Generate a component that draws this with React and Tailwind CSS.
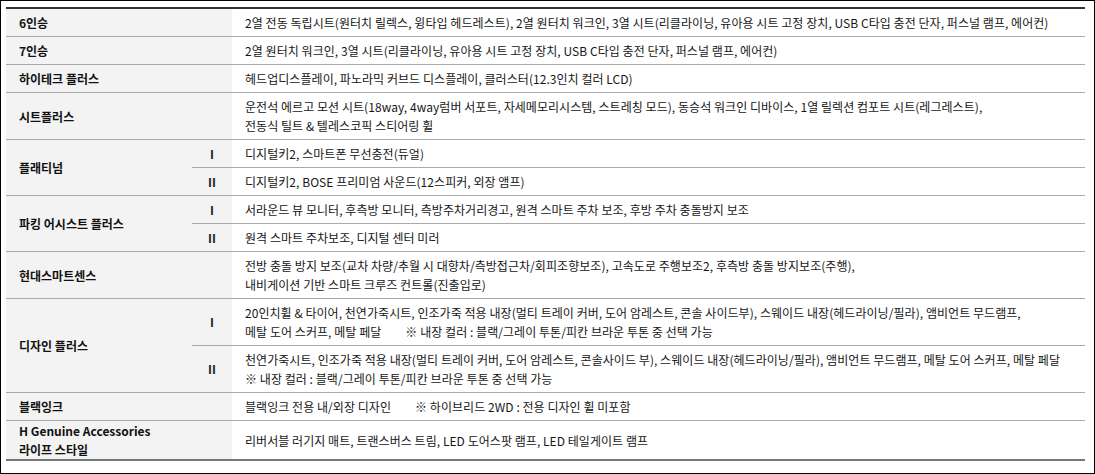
import React from "react";

const rows = [
  { label: "6인승", content: ["2열 전동 독립시트(원터치 릴렉스, 윙타입 헤드레스트), 2열 원터치 워크인, 3열 시트(리클라이닝, 유아용 시트 고정 장치, USB C타입 충전 단자, 퍼스널 램프, 에어컨)"] },
  { label: "7인승", content: ["2열 원터치 워크인, 3열 시트(리클라이닝, 유아용 시트 고정 장치, USB C타입 충전 단자, 퍼스널 램프, 에어컨)"] },
  { label: "하이테크 플러스", content: ["헤드업디스플레이, 파노라믹 커브드 디스플레이, 클러스터(12.3인치 컬러 LCD)"] },
  { label: "시트플러스", content: ["운전석 에르고 모션 시트(18way, 4way럼버 서포트, 자세메모리시스템, 스트레칭 모드), 동승석 워크인 디바이스, 1열 릴렉션 컴포트 시트(레그레스트),", "전동식 틸트 & 텔레스코픽 스티어링 휠"] },
  { label: "플래티넘", subs: [
    { n: "I", content: ["디지털키2, 스마트폰 무선충전(듀얼)"] },
    { n: "II", content: ["디지털키2, BOSE 프리미엄 사운드(12스피커, 외장 앰프)"] },
  ] },
  { label: "파킹 어시스트 플러스", subs: [
    { n: "I", content: ["서라운드 뷰 모니터, 후측방 모니터, 측방주차거리경고, 원격 스마트 주차 보조, 후방 주차 충돌방지 보조"] },
    { n: "II", content: ["원격 스마트 주차보조, 디지털 센터 미러"] },
  ] },
  { label: "현대스마트센스", content: ["전방 충돌 방지 보조(교차 차량/추월 시 대향차/측방접근차/회피조향보조), 고속도로 주행보조2, 후측방 충돌 방지보조(주행),", "내비게이션 기반 스마트 크루즈 컨트롤(진출입로)"] },
  { label: "디자인 플러스", subs: [
    { n: "I", content: ["20인치휠 & 타이어, 천연가죽시트, 인조가죽 적용 내장(멀티 트레이 커버, 도어 암레스트, 콘솔 사이드부), 스웨이드 내장(헤드라이닝/필라), 앰비언트 무드램프,", ["메탈 도어 스커프, 메탈 페달", "※ 내장 컬러 : 블랙/그레이 투톤/피칸 브라운 투톤 중 선택 가능"]] },
    { n: "II", content: ["천연가죽시트, 인조가죽 적용 내장(멀티 트레이 커버, 도어 암레스트, 콘솔사이드 부), 스웨이드 내장(헤드라이닝/필라), 앰비언트 무드램프, 메탈 도어 스커프, 메탈 페달", "※ 내장 컬러 : 블랙/그레이 투톤/피칸 브라운 투톤 중 선택 가능"] },
  ] },
  { label: "블랙잉크", content: [["블랙잉크 전용 내/외장 디자인", "※ 하이브리드 2WD : 전용 디자인 휠 미포함"]] },
  { label: ["H Genuine Accessories", "라이프 스타일"], content: ["리버서블 러기지 매트, 트랜스버스 트림, LED 도어스팟 램프, LED 테일게이트 램프"] },
];

function Content({ lines }) {
  return (
    <div className="flex-1 pl-[13px] py-[4px] flex flex-col justify-center text-[12px] leading-[19px] tracking-[0.05px] text-[#161616] whitespace-nowrap">
      {lines.map((l, i) =>
        Array.isArray(l) ? (
          <div key={i} className="flex gap-[24px]">
            <span>{l[0]}</span>
            <span>{l[1]}</span>
          </div>
        ) : (
          <div key={i}>{l}</div>
        )
      )}
    </div>
  );
}

export default function App() {
  return (
    <div
      className="w-[1095px] h-[474px] border border-black bg-white"
      style={{ fontFamily: '"Noto Sans CJK KR", "Noto Sans", sans-serif' }}
    >
      <div className="ml-[5px] mt-[6px] w-[1079px] border-t-2 border-[#333] border-b-2 border-b-[#777]">
        {rows.map((r, i) => (
          <div
            key={i}
            className={`flex ${i < rows.length - 1 ? "border-b border-[#aaaaaa]" : ""}`}
          >
            <div
              className={`${r.subs ? "w-[186px]" : "w-[226px]"} shrink-0 bg-[#f3f3f3] pl-[13px] flex flex-col justify-center text-[12px] leading-[19px] font-bold text-[#111]`}
            >
              {Array.isArray(r.label) ? r.label.map((t, k) => <div key={k}>{t}</div>) : r.label}
            </div>
            {r.subs ? (
              <div className="flex-1 flex flex-col">
                {r.subs.map((s, k) => (
                  <div
                    key={k}
                    className={`flex ${k < r.subs.length - 1 ? "border-b border-[#aaaaaa]" : ""}`}
                  >
                    <div className="w-[40px] shrink-0 bg-[#f3f3f3] flex items-center justify-center text-[12px] font-bold text-[#222]">
                      {s.n}
                    </div>
                    <Content lines={s.content} />
                  </div>
                ))}
              </div>
            ) : (
              <Content lines={r.content} />
            )}
          </div>
        ))}
      </div>
    </div>
  );
}
